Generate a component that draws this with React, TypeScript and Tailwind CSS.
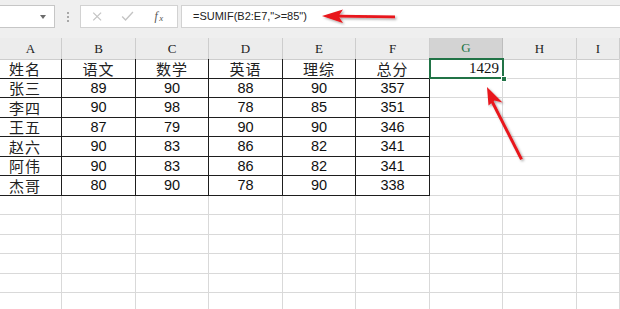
import React from "react";

const rows: string[][] = [
  ["姓名", "语文", "数学", "英语", "理综", "总分"],
  ["张三", "89", "90", "88", "90", "357"],
  ["李四", "90", "98", "78", "85", "351"],
  ["王五", "87", "79", "90", "90", "346"],
  ["赵六", "90", "83", "86", "82", "341"],
  ["阿伟", "90", "83", "86", "82", "341"],
  ["杰哥", "80", "90", "78", "90", "338"],
];

const letters = ["A", "B", "C", "D", "E", "F", "G", "H", "I"];
const gridCols = "grid grid-cols-[62px_74px_73px_74px_73px_74px_73px_74px_1fr]";

function Cell({ r, c }: { r: number; c: number }) {
  const inTable = r < rows.length && c < 6;
  const text = inTable ? rows[r][c] : "";
  const isZh = inTable && (c === 0 || r === 0);
  if (inTable) {
    return (
      <div
        className={
          "h-full border-r border-b border-[#1e1e1e] flex items-center leading-none " +
          (c === 0 ? "justify-start pl-[9px] " : "justify-center ") +
          (isZh
            ? "text-[15px] tracking-[1px] font-['Noto_Sans_CJK_SC',sans-serif] text-[#222]"
            : "text-[14.5px] font-['Liberation_Sans',sans-serif] text-[#111]")
        }
      >
        {text}
      </div>
    );
  }
  return <div className="h-full border-r border-b border-[#d9d9d9]" />;
}

export default function App() {
  const totalRows = 13;
  return (
    <div className="w-[620px] h-[309px] overflow-hidden relative bg-white font-['Liberation_Sans','Noto_Sans_CJK_SC',sans-serif]">
      {/* Toolbar */}
      <div className="h-[38px] bg-[#efefef] flex items-start pt-[5px]">
        <div className="w-[55px] h-[23px] bg-white border border-l-0 border-[#c6c6c6] flex items-center justify-end pr-[8px]">
          <div className="w-0 h-0 border-l-[3.5px] border-r-[3.5px] border-t-[4px] border-l-transparent border-r-transparent border-t-[#6b6b6b]" />
        </div>
        <div className="w-[25px] h-[23px] flex flex-col items-center justify-center gap-[2px]">
          <div className="w-[2px] h-[2px] bg-[#a8a8a8]" />
          <div className="w-[2px] h-[2px] bg-[#a8a8a8]" />
          <div className="w-[2px] h-[2px] bg-[#a8a8a8]" />
        </div>
        <div className="w-[98px] h-[23px] bg-white border border-[#d2d2d2] flex items-center">
          <svg width="98" height="23" viewBox="0 0 98 23" className="block">
            <path d="M12.5 7.5 L20.5 15.5 M20.5 7.5 L12.5 15.5" stroke="#c4c4c4" strokeWidth="1.3" fill="none" />
            <path d="M42 11.5 L45.5 15 L53 7" stroke="#c4c4c4" strokeWidth="1.4" fill="none" />
            <text x="75" y="15.5" fontFamily="Liberation Serif, serif" fontStyle="italic" fontSize="12" fill="#555">f</text>
            <text x="80" y="16" fontFamily="Liberation Serif, serif" fontStyle="italic" fontSize="9" fill="#555">x</text>
          </svg>
        </div>
        <div className="ml-[3px] flex-1 h-[23px] bg-white border border-r-0 border-[#d2d2d2] flex items-center pl-[11px] text-[11px] text-[#222] font-['Liberation_Sans',sans-serif]">
          =SUMIF(B2:E7,"&gt;=85")
        </div>
      </div>

      {/* Column headers */}
      <div className={gridCols + " h-[21px] bg-[#ececec]"}>
        {letters.map((l, i) =>
          i === 6 ? (
            <div
              key={l}
              className="h-full bg-[#d3d3d3] border-r border-[#bdbdbd] border-b-2 border-b-[#217346] flex items-center justify-center text-[13px] text-[#217346] font-['Liberation_Serif',serif]"
            >
              {l}
            </div>
          ) : (
            <div
              key={l}
              className="h-full border-r border-b border-[#cdcdcd] flex items-center justify-center text-[13px] text-[#222] font-['Liberation_Serif',serif]"
            >
              {l}
            </div>
          )
        )}
      </div>

      {/* Rows */}
      <div className="relative">
        {Array.from({ length: totalRows }).map((_, r) => (
          <div key={r} className={gridCols + " h-[19.5px]"}>
            {letters.map((_, c) => (
              <Cell key={c} r={r} c={c} />
            ))}
          </div>
        ))}
        {/* Selected cell G2 */}
        <div className="absolute left-[429px] top-[-1px] w-[75px] h-[21px] border-2 border-[#217346] flex items-center justify-end pr-[3px] leading-none text-[15px] text-[#111] font-['Liberation_Serif',serif] bg-white">
          1429
        </div>
        <div className="absolute left-[501px] top-[17px] w-[6px] h-[6px] bg-[#217346] border border-white" />
      </div>

      {/* Red arrows */}
      <svg className="absolute left-0 top-0 pointer-events-none" width="620" height="309" viewBox="0 0 620 309">
        <defs>
          <filter id="sh" x="-20%" y="-20%" width="140%" height="140%">
            <feDropShadow dx="1.5" dy="1.5" stdDeviation="1.2" floodColor="#000" floodOpacity="0.35" />
          </filter>
        </defs>
        <g filter="url(#sh)" fill="#e8141a" stroke="none">
          <path d="M338 14.8 L395 15.6 L395 18.2 L338 17.6 Z" />
          <path d="M322 16 L343 9.5 L338.5 16.2 L343 23 Z" />
          <path d="M493.5 101 L522.8 158.8 L520.2 160 L490.8 102.3 Z" />
          <path d="M487 87 L502.5 102.5 L494.5 100.5 L488.5 105.5 Z" />
        </g>
      </svg>
    </div>
  );
}
